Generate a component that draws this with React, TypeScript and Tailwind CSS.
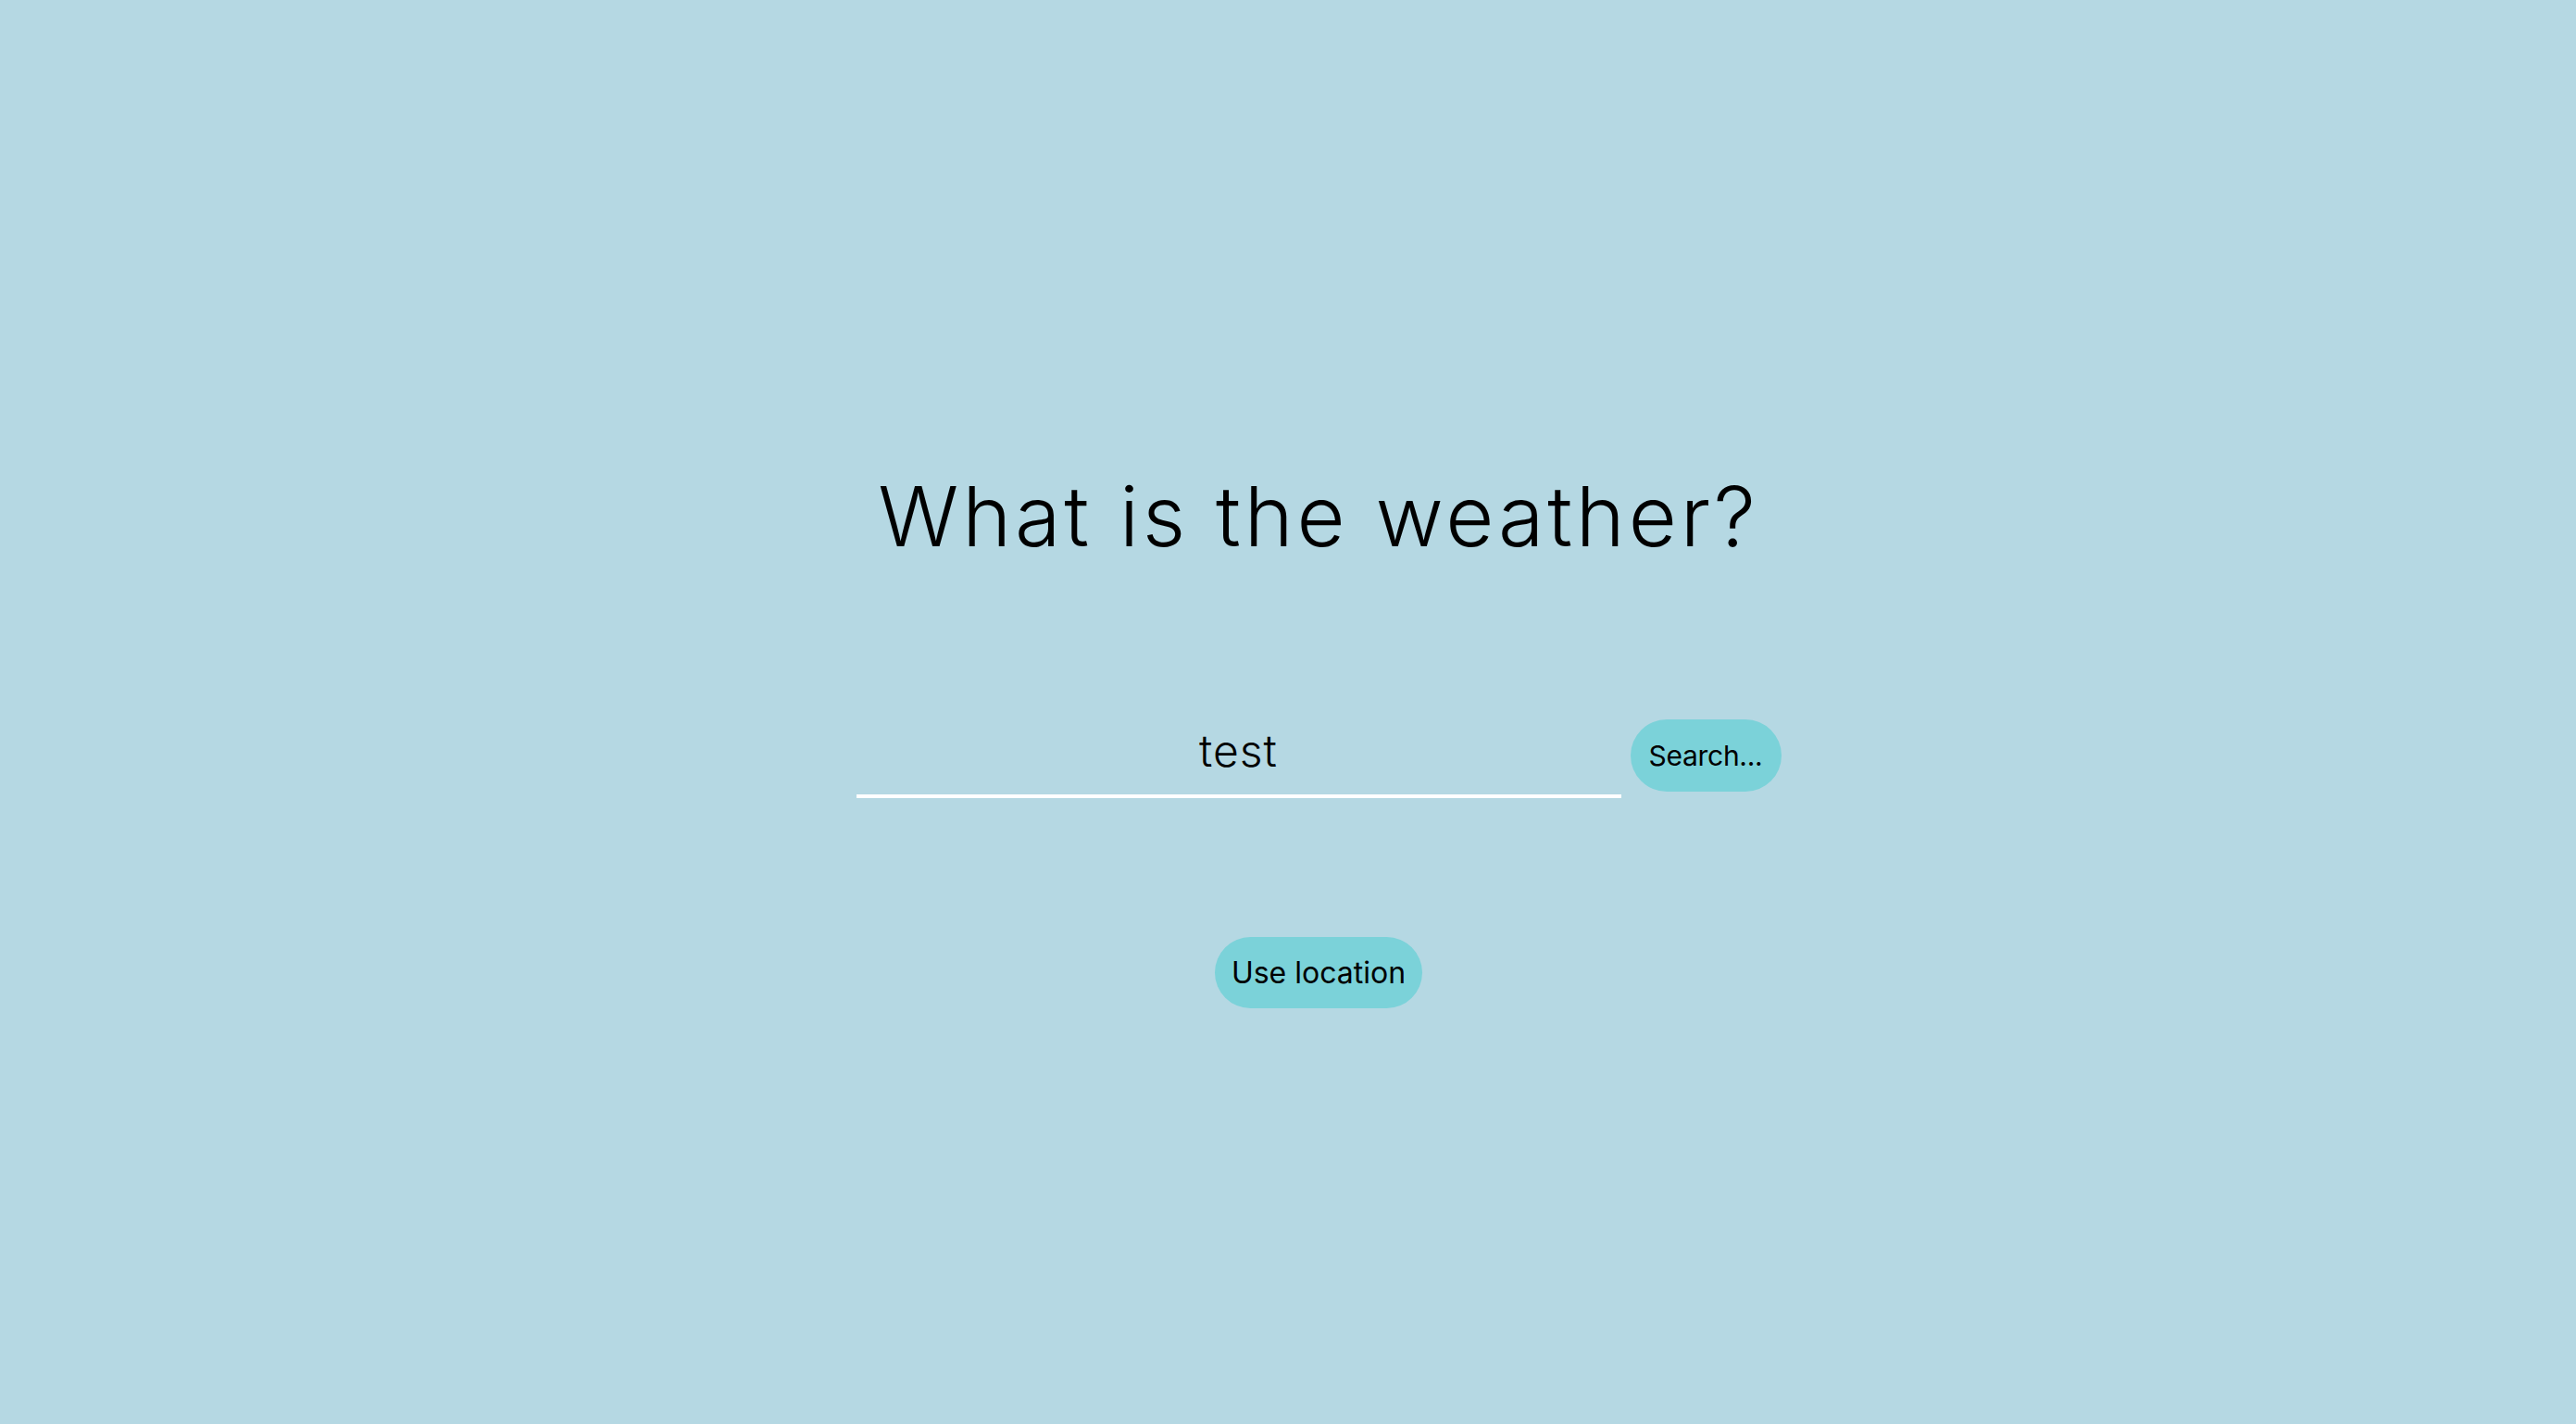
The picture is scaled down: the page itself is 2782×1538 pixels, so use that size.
export default function App() {
  return (
    <div className="min-h-screen w-full bg-[#b5d8e3] flex flex-col items-center pl-[66px] pt-[504px] font-['Inter',sans-serif] font-light text-black">
      <h1 className="text-[90px] leading-[1.2] tracking-[3.8px] whitespace-nowrap">What is the weather?</h1>
      <div className="mt-[165px] flex items-end gap-[10px]">
        <div className="w-[826px] border-b-[4px] border-white pb-[23px] flex justify-center">
          <span className="text-[48px] leading-none tracking-[1px]">test</span>
        </div>
        <button className="mb-[7px] h-[78px] w-[163px] rounded-full bg-[#7bd2d9] text-[30px] font-normal tracking-[-0.3px]">Search...</button>
      </div>
      <button className="mt-[150px] h-[77px] w-[224px] rounded-full bg-[#7bd2d9] text-[32px] font-normal">Use location</button>
    </div>
  );
}
